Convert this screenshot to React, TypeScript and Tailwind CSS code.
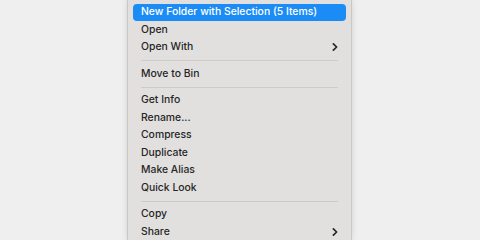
type Entry = { label: string; sub?: boolean; active?: boolean } | 'sep'

const ITEMS: Entry[] = [
  { label: 'New Folder with Selection (5 Items)', active: true },
  { label: 'Open' },
  { label: 'Open With', sub: true },
  'sep',
  { label: 'Move to Bin' },
  'sep',
  { label: 'Get Info' },
  { label: 'Rename...' },
  { label: 'Compress' },
  { label: 'Duplicate' },
  { label: 'Make Alias' },
  { label: 'Quick Look' },
  'sep',
  { label: 'Copy' },
  { label: 'Share', sub: true },
]

function Chevron() {
  return (
    <svg width="6" height="8" viewBox="0 0 6 8" className="text-[#262626]">
      <path d="M1.4 0.9 L4.6 4 L1.4 7.1" fill="none" stroke="currentColor" strokeWidth="1.7" strokeLinecap="round" strokeLinejoin="round" />
    </svg>
  )
}

export default function App() {
  return (
    <div className="h-[240px] w-[480px] overflow-hidden bg-[#efefef] font-['Inter','Helvetica',sans-serif]">
      <div className="ml-[127px] h-full w-[225px] border-x border-[#c9c8c7] bg-[#e2e0de] px-[5px] pt-[3.5px] shadow-[0_0_6px_rgba(0,0,0,0.12)]">
        {ITEMS.map((it, i) =>
          it === 'sep' ? (
            <div key={i} className="flex h-[9px] items-center px-[8px]">
              <div className="h-px w-full bg-[#cdcbc9]" />
            </div>
          ) : (
            <div
              key={i}
              className={`flex h-[17.5px] items-center justify-between whitespace-nowrap rounded-[4px] pl-[8px] pr-[8px] text-[10.4px] font-[450] leading-none ${
                it.active ? 'bg-[#1b8cf5] text-white' : 'text-[#262626]'
              }`}
            >
              <span>{it.label}</span>
              {it.sub && <Chevron />}
            </div>
          )
        )}
      </div>
    </div>
  )
}
